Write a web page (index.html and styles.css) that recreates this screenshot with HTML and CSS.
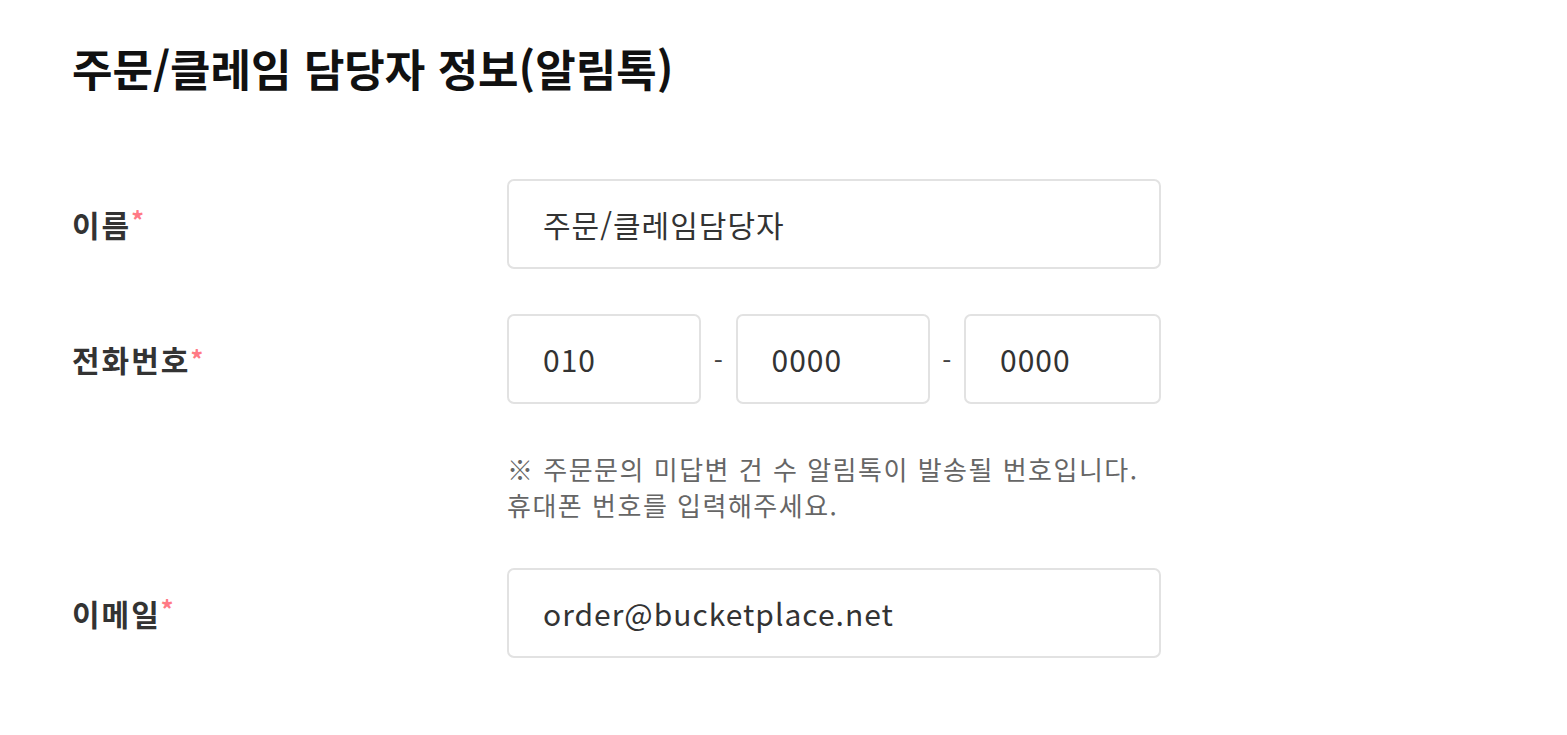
FILE: index.html
```html
<!DOCTYPE html>
<html lang="ko">
<head>
  <meta charset="UTF-8">
  <title>주문/클레임 담당자 정보</title>
  <link rel="stylesheet" href="styles.css">
</head>
<body>
  <div class="section">
    <h2 class="title">주문/클레임 담당자 정보(알림톡)</h2>

    <div class="form">
      <!-- 이름 -->
      <div class="row">
        <label class="label">이름<span class="req">*</span></label>
        <div class="field">
          <input class="box wide" type="text" value="주문/클레임담당자">
        </div>
      </div>

      <!-- 전화번호 -->
      <div class="row top">
        <label class="label">전화번호<span class="req">*</span></label>
        <div class="field">
          <div class="phone">
            <input class="box num" type="text" value="010">
            <span class="dash">-</span>
            <input class="box num" type="text" value="0000">
            <span class="dash">-</span>
            <input class="box num" type="text" value="0000">
          </div>
          <p class="hint">※ 주문문의 미답변 건 수 알림톡이 발송될 번호입니다.<br>휴대폰 번호를 입력해주세요.</p>
        </div>
      </div>

      <!-- 이메일 -->
      <div class="row">
        <label class="label">이메일<span class="req">*</span></label>
        <div class="field">
          <input class="box wide" type="text" value="order@bucketplace.net">
        </div>
      </div>
    </div>
  </div>
</body>
</html>
```

FILE: styles.css
```css
body {
  margin: 0;
  background: #fff;
  font-family: 'Noto Sans CJK KR', 'Noto Sans', sans-serif;
  color: #222;
}

.section {
  padding: 40px 72px;
}

.title {
  margin: 0;
  font-size: 44px;
  font-weight: 700;
  line-height: 56px;
  color: #111;
}

.form {
  margin-top: 83px;
}

.row {
  display: flex;
  align-items: center;
  margin-bottom: 45px;
}

.row.top {
  align-items: flex-start;
}

.row.top .label {
  height: 90px;
  line-height: 90px;
}

.label {
  width: 435px;
  flex-shrink: 0;
  font-size: 30px;
  font-weight: 700;
  letter-spacing: 2px;
  color: #333;
}

.req {
  color: #ff7a85;
  font-size: 25px;
  vertical-align: top;
  position: relative;
  top: -1px;
  letter-spacing: 0;
}

.field {
  width: 654px;
}

.box {
  box-sizing: border-box;
  height: 90px;
  border: 2px solid #e2e2e2;
  border-radius: 7px;
  padding: 0 0 0 34px;
  font-family: 'Noto Sans CJK KR', 'Noto Sans', sans-serif;
  font-size: 30px;
  letter-spacing: 1px;
  color: #333;
  background: #fff;
  outline: none;
}

.wide {
  width: 100%;
}

.phone {
  display: flex;
  align-items: center;
}

.num {
  width: 194px;
  flex-shrink: 0;
}

.phone .num:last-child {
  width: 197px;
}

.dash {
  width: 36px;
  text-align: center;
  font-size: 26px;
  color: #444;
}

.hint {
  margin: 47px 0 0;
  font-size: 26px;
  line-height: 36px;
  color: #666;
  letter-spacing: 1.5px;
}
```
